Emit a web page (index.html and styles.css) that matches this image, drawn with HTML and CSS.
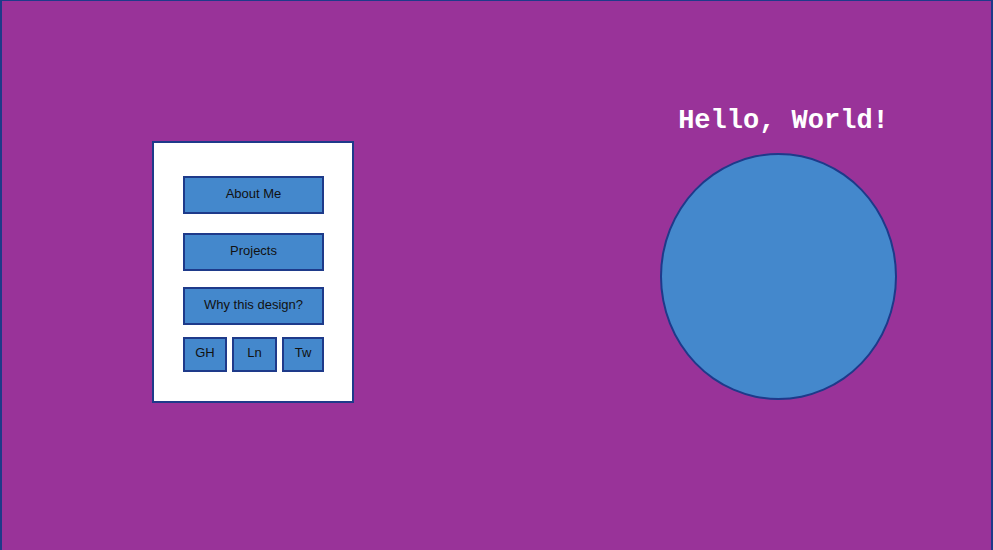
FILE: index.html
```html
<!DOCTYPE html>
<html>
<head>
<meta charset="utf-8">
<link rel="stylesheet" href="styles.css">
</head>
<body>
<div class="frame">
  <nav class="card">
    <a class="btn btn-first">About Me</a>
    <a class="btn btn-second">Projects</a>
    <a class="btn btn-third">Why this design?</a>
    <div class="socials">
      <a class="sbtn sbtn-gh">GH</a>
      <a class="sbtn sbtn-ln">Ln</a>
      <a class="sbtn sbtn-tw">Tw</a>
    </div>
  </nav>
  <section class="hero">
    <h1 class="title">Hello, World!</h1>
    <div class="orb"></div>
  </section>
</div>
</body>
</html>
```
FILE: styles.css
```css
html, body {
  margin: 0;
  padding: 0;
  background: #993399;
  overflow: hidden;
}
.frame {
  box-sizing: border-box;
  width: 993px;
  height: 552px;
  background: #993399;
  border: 2px solid #1e3a8a;
  border-top-width: 1px;
  display: flex;
  align-items: flex-start;
  padding-left: 150px;
}
.card {
  box-sizing: border-box;
  width: 202px;
  height: 262px;
  margin-top: 140px;
  background: #ffffff;
  border: 2px solid #1e3a8a;
  padding: 33px 0 0 29px;
  display: flex;
  flex-direction: column;
  align-items: flex-start;
}
.btn, .sbtn {
  box-sizing: border-box;
  display: block;
  background: #4488cc;
  border: 2px solid #1e3a8a;
  color: #111111;
  font-family: "Liberation Sans", Arial, sans-serif;
  font-size: 13px;
  line-height: 15px;
  text-align: center;
}
.btn {
  width: 141px;
  height: 38px;
  padding-top: 8px;
}
.btn-second { margin-top: 19px; }
.btn-third { margin-top: 16px; }
.socials {
  display: flex;
  margin-top: 12px;
  gap: 5px;
}
.sbtn {
  height: 35px;
  padding-top: 6px;
}
.sbtn-gh { width: 44px; }
.sbtn-ln { width: 45px; }
.sbtn-tw { width: 42px; }
.hero {
  margin-left: auto;
  margin-right: 94px;
  margin-top: 105px;
  width: 237px;
  display: flex;
  flex-direction: column;
  align-items: center;
}
.title {
  margin: 0;
  padding-left: 10px;
  white-space: nowrap;
  font-family: "Courier New", Courier, "Nimbus Mono PS", "Nimbus Mono L", FreeMono, "Liberation Mono", monospace;
  font-weight: bold;
  font-size: 27px;
  line-height: 30px;
  color: #ffffff;
}
.orb {
  box-sizing: border-box;
  margin-top: 17px;
  width: 237px;
  height: 247px;
  border-radius: 50%;
  background: #4488cc;
  border: 2px solid #1e3a8a;
}
```
